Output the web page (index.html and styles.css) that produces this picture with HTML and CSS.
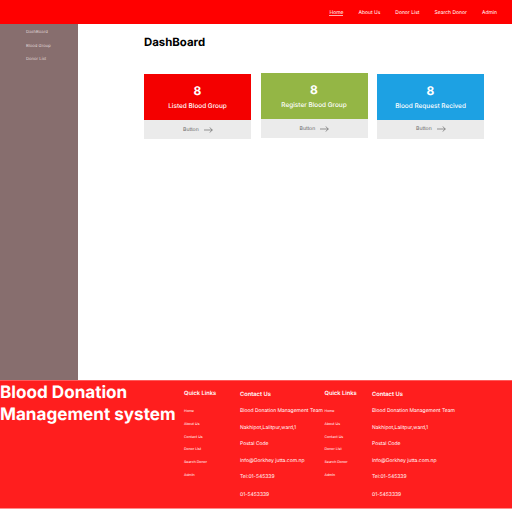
FILE: index.html
```html
<!DOCTYPE html>
<html lang="en">
<head>
<meta charset="utf-8">
<title>DashBoard</title>
<link rel="stylesheet" href="styles.css">
</head>
<body>
<header class="topbar">
  <nav class="nav">
    <a class="active">Home</a><a>About Us</a><a>Donor List</a><a>Search Donor</a><a>Admin</a>
  </nav>
</header>
<div class="layout">
  <aside class="sidebar"><a>DashBoard</a><a>Blood Group</a><a>Donor List</a></aside>
  <main class="main">
    <h1>DashBoard</h1>
    <div class="cards">
      <section class="card red">
        <div class="info"><strong>8</strong><span>Listed Blood Group</span></div>
        <div class="action"><span>Button</span><svg class="arrow" viewBox="0 0 9 6"><path d="M0 3h8.3M5.6 .4 8.3 3 5.6 5.6"/></svg></div>
      </section>
      <section class="card green">
        <div class="info"><strong>8</strong><span>Register Blood Group</span></div>
        <div class="action"><span>Button</span><svg class="arrow" viewBox="0 0 9 6"><path d="M0 3h8.3M5.6 .4 8.3 3 5.6 5.6"/></svg></div>
      </section>
      <section class="card blue">
        <div class="info"><strong>8</strong><span>Blood Request Recived</span></div>
        <div class="action"><span>Button</span><svg class="arrow" viewBox="0 0 9 6"><path d="M0 3h8.3M5.6 .4 8.3 3 5.6 5.6"/></svg></div>
      </section>
    </div>
  </main>
</div>
<footer class="footer">
  <h2>Blood Donation<br>Management system</h2>
  <div class="links">
    <h3>Quick Links</h3>
    <a>Home</a><a>About Us</a><a>Contact Us</a><a>Donor List</a><a>Search Donor</a><a>Admin</a>
  </div>
  <div class="contact">
    <h3>Contact Us</h3>
    <p>Blood Donation Management Team</p><p>Nakhipot,Lalitpur,ward,1</p><p>Postal Code</p><p>Info@Gorkhey jutta.com.np</p><p>Tel:01-545339</p><p>01-5453339</p>
  </div>
  <div class="links second">
    <h3>Quick Links</h3>
    <a>Home</a><a>About Us</a><a>Contact Us</a><a>Donor List</a><a>Search Donor</a><a>Admin</a>
  </div>
  <div class="contact">
    <h3>Contact Us</h3>
    <p>Blood Donation Management Team</p><p>Nakhipot,Lalitpur,ward,1</p><p>Postal Code</p><p>Info@Gorkhey jutta.com.np</p><p>Tel:01-545339</p><p>01-5453339</p>
  </div>
</footer>
</body>
</html>
```
FILE: styles.css
```css
* { box-sizing: border-box; }
body {
  margin: 0;
  height: 509px;
  overflow: hidden;
  background: #fff;
  font-family: Inter, "Liberation Sans", sans-serif;
  white-space: nowrap;
  text-rendering: geometricPrecision;
}
h1, h2, h3, p { margin: 0; }
.topbar {
  height: 24px;
  background: #f00;
  display: flex;
  justify-content: flex-end;
  padding: 9px 15px 0 0;
}
.nav { display: flex; gap: 15px; color: #fff; font-size: 5px; line-height: 8px; }
.nav a { height: 7px; }
.nav .active { border-bottom: 1px solid #ffb0b0; }
.layout { display: flex; height: 356px; }
.sidebar {
  width: 78px;
  background: #876e6e;
  padding: 6px 0 0 26px;
  display: flex;
  flex-direction: column;
  gap: 7.5px;
  color: #e0d8d8;
  font-size: 4.2px;
  line-height: 6px;
}
.main { flex: 1; padding: 10.5px 28px 0 66.3px; }
h1 { font-size: 11.4px; line-height: 15px; font-weight: 700; color: #000; }
.cards { display: flex; gap: 9.5px; margin-top: 24.5px; }
.card { width: 107px; height: 65px; }
.card.green { margin-top: -1px; }
.info {
  height: 46px;
  padding-top: 9px;
  display: flex;
  flex-direction: column;
  align-items: center;
  color: #fff;
}
.info strong { font-size: 12px; line-height: 15px; font-weight: 700; }
.info span { font-size: 6.45px; line-height: 9px; margin-top: 4px; font-weight: 500; }
.red .info { background: #f40000; }
.green .info { background: #94b645; }
.blue .info { background: #1da1e3; }
.blue .info { height: 45.5px; }
.action {
  height: 19px;
  background: #ebebeb;
  display: flex;
  align-items: center;
  justify-content: center;
  gap: 5px;
  color: #666;
  font-size: 5.1px;
}
.action { padding-left: 0.8px; }
.arrow { width: 9px; height: 6px; fill: none; stroke: #555; stroke-width: 0.6; }
.footer {
  height: 129px;
  background: #ff1e1e;
  border-top: 1px solid #ff5a5a;
  border-bottom: 1px solid #ff8c8c;
  color: #fff;
  display: flex;
}
h2 { width: 184px; font-size: 17.12px; line-height: 22px; font-weight: 700; padding-top: 0.5px; }
h3 { font-size: 5.75px; line-height: 8px; font-weight: 600; }
.links { width: 56px; padding-top: 9px; }
.links.second { width: 47.5px; }
.links a { display: block; font-size: 3.55px; line-height: 5px; margin-bottom: 7.8px; }
.links h3 { margin-bottom: 11px; }
.contact { width: 84.5px; padding-top: 9.5px; }
.contact h3 { margin-bottom: 9.5px; }
.contact p { font-size: 5px; line-height: 7px; margin-bottom: 9.5px; }
.contact p:nth-of-type(5) { margin-bottom: 11.3px; }
```
